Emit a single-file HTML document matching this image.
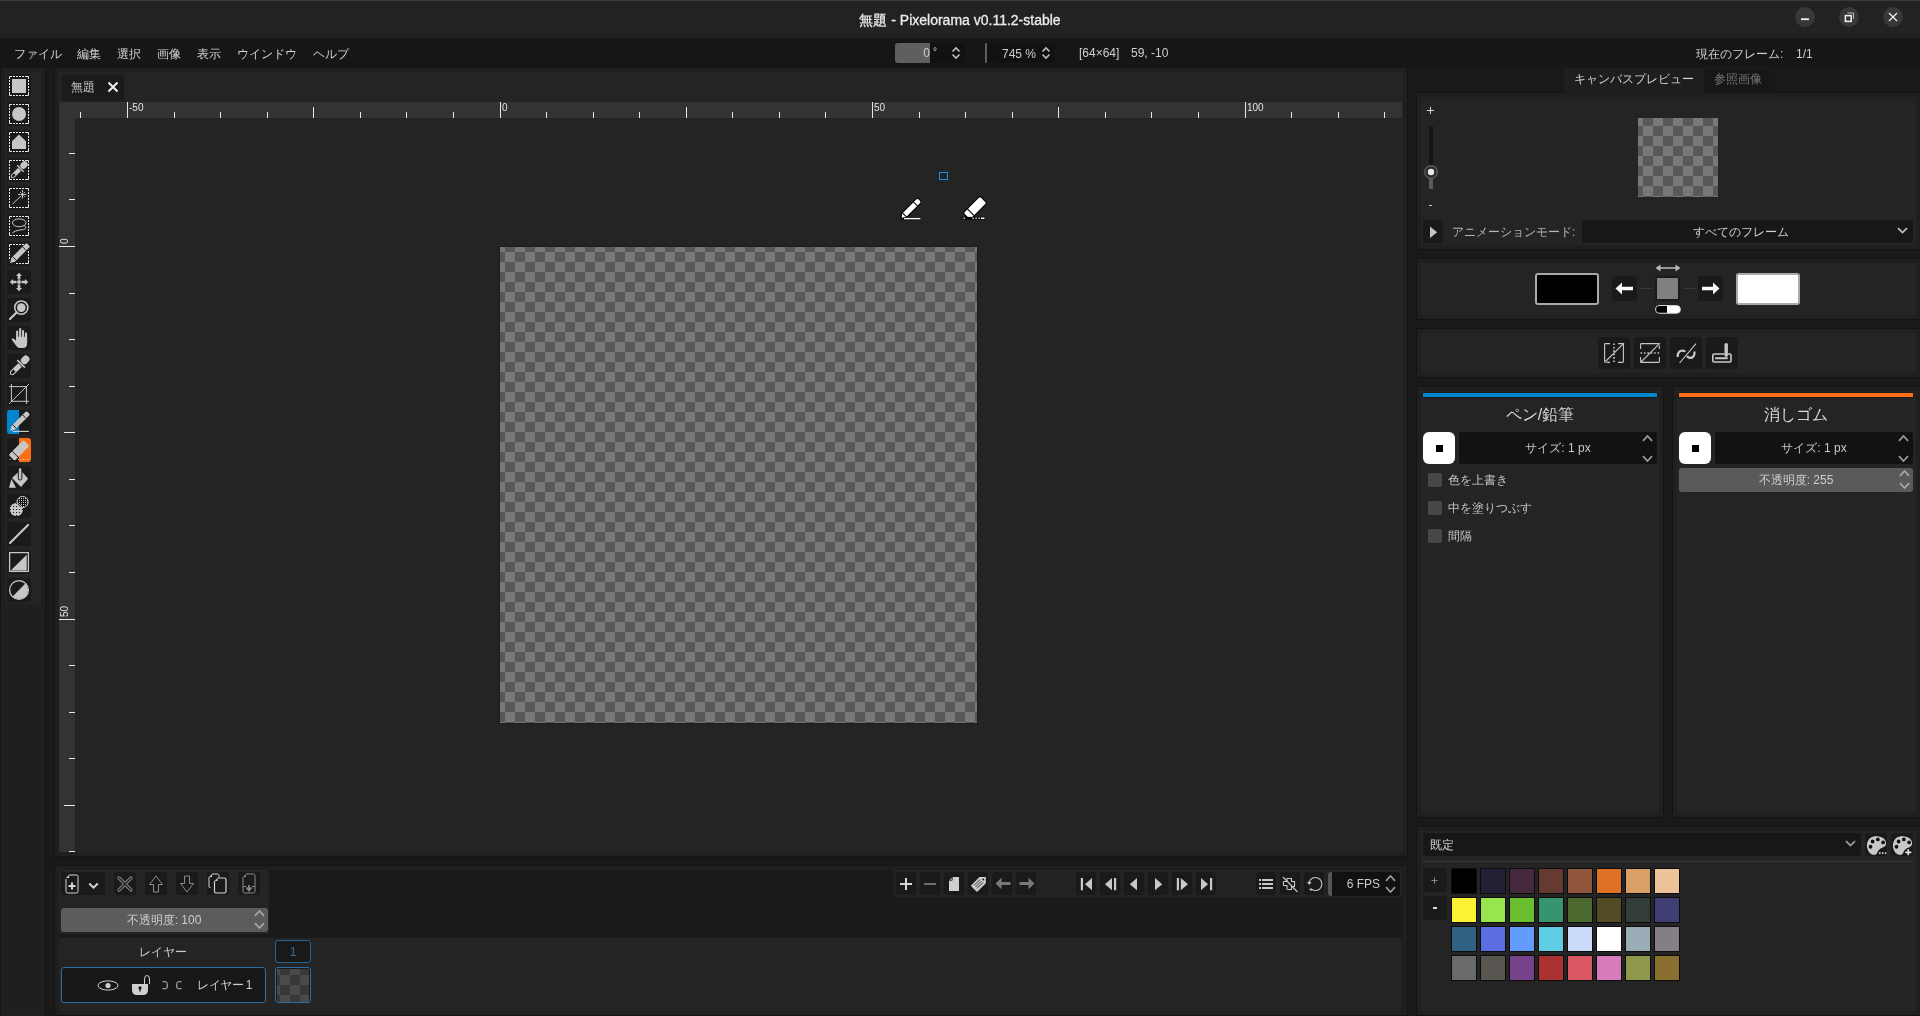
<!DOCTYPE html>
<html><head><meta charset="utf-8">
<style>
*{margin:0;padding:0;box-sizing:border-box}
html,body{width:1920px;height:1016px;overflow:hidden}
body{background:#191919;position:relative;font-family:"Liberation Sans",sans-serif;color:#d2d2d2;font-size:12px}
.a{position:absolute}
.p{position:absolute;background:#1f1f1f;border:1px solid #141414}
.i{position:absolute;background:#242424}
.t{position:absolute;white-space:nowrap;line-height:1;will-change:transform}
svg{position:absolute;overflow:visible}
</style></head><body>
<div class="a" style="left:0px;top:0px;width:1920px;height:38px;background:#222222;border-top:1px solid #3a3a3a"></div>
<div class="t" style="left:660px;width:600px;text-align:center;top:13px;font-size:14px;color:#ececec;-webkit-text-stroke:0.3px #ececec">無題 - Pixelorama v0.11.2-stable</div>
<div class="a" style="left:1795px;top:7px;width:20px;height:20px;background:#383838;border-radius:50%"></div>
<div class="a" style="left:1839px;top:7px;width:20px;height:20px;background:#383838;border-radius:50%"></div>
<div class="a" style="left:1883px;top:7px;width:20px;height:20px;background:#383838;border-radius:50%"></div>
<svg style="left:1801px;top:18px" width="8" height="3"><path d="M0 1.2 H8" stroke="#f2f2f2" stroke-width="1.8"/></svg>
<svg style="left:1844px;top:12px" width="11" height="11"><path d="M3.5 1 H9.5 V7" fill="none" stroke="#bdbdbd" stroke-width="1"/><rect x="1.4" y="3.6" width="5.8" height="5.8" fill="none" stroke="#f2f2f2" stroke-width="1.5"/></svg>
<svg style="left:1888px;top:12px" width="10" height="10"><path d="M1 1 L9 9 M9 1 L1 9" stroke="#f2f2f2" stroke-width="1.2"/></svg>
<div class="a" style="left:0px;top:38px;width:1920px;height:29px;background:#161616"></div>
<div class="t" style="left:14px;top:48px;font-size:12px;color:#d0d0d0;">ファイル</div>
<div class="t" style="left:77px;top:48px;font-size:12px;color:#d0d0d0;">編集</div>
<div class="t" style="left:117px;top:48px;font-size:12px;color:#d0d0d0;">選択</div>
<div class="t" style="left:157px;top:48px;font-size:12px;color:#d0d0d0;">画像</div>
<div class="t" style="left:197px;top:48px;font-size:12px;color:#d0d0d0;">表示</div>
<div class="t" style="left:237px;top:48px;font-size:12px;color:#d0d0d0;">ウインドウ</div>
<div class="t" style="left:313px;top:48px;font-size:12px;color:#d0d0d0;">ヘルプ</div>
<div class="p" style="left:0px;top:67px;width:46px;height:950px"></div>
<div class="i" style="left:5px;top:72px;width:36px;height:940px"></div>
<div class="a" style="left:5px;top:604px;width:36px;height:407px;background:#1f1f1f"></div>
<div class="p" style="left:54px;top:67px;width:1354px;height:790px"></div>
<div class="i" style="left:59px;top:72px;width:1344px;height:780px"></div>
<div class="p" style="left:54px;top:865px;width:1354px;height:151px"></div>
<div class="i" style="left:59px;top:870px;width:1344px;height:141px"></div>
<div class="p" style="left:1416px;top:92px;width:505px;height:158px"></div>
<div class="i" style="left:1421px;top:97px;width:495px;height:148px"></div>
<div class="p" style="left:1416px;top:258px;width:505px;height:62px"></div>
<div class="i" style="left:1421px;top:263px;width:495px;height:52px"></div>
<div class="p" style="left:1416px;top:328px;width:505px;height:50px"></div>
<div class="i" style="left:1421px;top:333px;width:495px;height:40px"></div>
<div class="p" style="left:1416px;top:386px;width:248px;height:432px"></div>
<div class="i" style="left:1421px;top:391px;width:238px;height:422px"></div>
<div class="p" style="left:1672px;top:386px;width:249px;height:432px"></div>
<div class="i" style="left:1677px;top:391px;width:239px;height:422px"></div>
<div class="p" style="left:1416px;top:826px;width:505px;height:190px"></div>
<div class="i" style="left:1421px;top:831px;width:495px;height:180px"></div>
<div class="a" style="left:895px;top:43px;width:70px;height:20px;background:#111111;border-radius:3px"></div>
<div class="a" style="left:895px;top:43px;width:35px;height:20px;background:#5f5f5f;border-radius:3px 0 0 3px"></div>
<div class="t" style="left:330px;width:600px;text-align:right;top:47px;font-size:12px;color:#cfcfcf;">0</div>
<div class="t" style="left:933px;top:47px;font-size:10px;color:#cfcfcf;">°</div>
<svg style="left:950px;top:45px" width="12" height="16"><path d="M2.5 6.5 L6 3 L9.5 6.5 M2.5 9.5 L6 13 L9.5 9.5" fill="none" stroke="#bdbdbd" stroke-width="1.6"/></svg>
<div class="a" style="left:985px;top:43px;width:2px;height:20px;background:#5f5f5f;border-radius:1px"></div>
<div class="a" style="left:987px;top:43px;width:68px;height:20px;background:#111111;border-radius:0 3px 3px 0"></div>
<div class="t" style="left:1002px;top:48px;font-size:12px;color:#cfcfcf;">745 %</div>
<svg style="left:1040px;top:45px" width="12" height="16"><path d="M2.5 6.5 L6 3 L9.5 6.5 M2.5 9.5 L6 13 L9.5 9.5" fill="none" stroke="#bdbdbd" stroke-width="1.6"/></svg>
<div class="t" style="left:1079px;top:47px;font-size:12px;color:#cfcfcf;">[64×64]</div>
<div class="t" style="left:1131px;top:47px;font-size:12px;color:#cfcfcf;">59, -10</div>
<div class="t" style="left:1696px;top:48px;font-size:12px;color:#cfcfcf;">現在のフレーム:</div>
<div class="t" style="left:1796px;top:48px;font-size:12px;color:#cfcfcf;">1/1</div>
<div class="a" style="left:61px;top:74px;width:64px;height:27px;background:#1b1b1b;border:1px solid #222;border-bottom:none"></div>
<div class="t" style="left:71px;top:81px;font-size:12px;color:#c8c8c8;">無題</div>
<svg style="left:107px;top:81px" width="12" height="12"><path d="M1.5 1.5 L10.5 10.5 M10.5 1.5 L1.5 10.5" stroke="#eeeeee" stroke-width="2"/></svg>
<div class="a" style="left:59px;top:102px;width:1343px;height:16px;background:#333333"></div>
<div class="a" style="left:59px;top:118px;width:16px;height:734px;background:#333333"></div>
<div class="a" style="left:80px;top:112px;width:1px;height:6px;background:#e8e8e8"></div>
<div class="a" style="left:127px;top:102px;width:1px;height:16px;background:#e8e8e8"></div>
<div class="t" style="left:129px;top:103px;font-size:10px;color:#e2e2e2">-50</div>
<div class="a" style="left:174px;top:112px;width:1px;height:6px;background:#e8e8e8"></div>
<div class="a" style="left:220px;top:112px;width:1px;height:6px;background:#e8e8e8"></div>
<div class="a" style="left:267px;top:112px;width:1px;height:6px;background:#e8e8e8"></div>
<div class="a" style="left:313px;top:107px;width:1px;height:11px;background:#e8e8e8"></div>
<div class="a" style="left:360px;top:112px;width:1px;height:6px;background:#e8e8e8"></div>
<div class="a" style="left:406px;top:112px;width:1px;height:6px;background:#e8e8e8"></div>
<div class="a" style="left:453px;top:112px;width:1px;height:6px;background:#e8e8e8"></div>
<div class="a" style="left:500px;top:102px;width:1px;height:16px;background:#e8e8e8"></div>
<div class="t" style="left:502px;top:103px;font-size:10px;color:#e2e2e2">0</div>
<div class="a" style="left:546px;top:112px;width:1px;height:6px;background:#e8e8e8"></div>
<div class="a" style="left:593px;top:112px;width:1px;height:6px;background:#e8e8e8"></div>
<div class="a" style="left:639px;top:112px;width:1px;height:6px;background:#e8e8e8"></div>
<div class="a" style="left:686px;top:107px;width:1px;height:11px;background:#e8e8e8"></div>
<div class="a" style="left:732px;top:112px;width:1px;height:6px;background:#e8e8e8"></div>
<div class="a" style="left:779px;top:112px;width:1px;height:6px;background:#e8e8e8"></div>
<div class="a" style="left:825px;top:112px;width:1px;height:6px;background:#e8e8e8"></div>
<div class="a" style="left:872px;top:102px;width:1px;height:16px;background:#e8e8e8"></div>
<div class="t" style="left:874px;top:103px;font-size:10px;color:#e2e2e2">50</div>
<div class="a" style="left:919px;top:112px;width:1px;height:6px;background:#e8e8e8"></div>
<div class="a" style="left:965px;top:112px;width:1px;height:6px;background:#e8e8e8"></div>
<div class="a" style="left:1012px;top:112px;width:1px;height:6px;background:#e8e8e8"></div>
<div class="a" style="left:1058px;top:107px;width:1px;height:11px;background:#e8e8e8"></div>
<div class="a" style="left:1105px;top:112px;width:1px;height:6px;background:#e8e8e8"></div>
<div class="a" style="left:1151px;top:112px;width:1px;height:6px;background:#e8e8e8"></div>
<div class="a" style="left:1198px;top:112px;width:1px;height:6px;background:#e8e8e8"></div>
<div class="a" style="left:1245px;top:102px;width:1px;height:16px;background:#e8e8e8"></div>
<div class="t" style="left:1247px;top:103px;font-size:10px;color:#e2e2e2">100</div>
<div class="a" style="left:1291px;top:112px;width:1px;height:6px;background:#e8e8e8"></div>
<div class="a" style="left:1338px;top:112px;width:1px;height:6px;background:#e8e8e8"></div>
<div class="a" style="left:1384px;top:112px;width:1px;height:6px;background:#e8e8e8"></div>
<div class="a" style="left:69px;top:153px;width:6px;height:1px;background:#e8e8e8"></div>
<div class="a" style="left:69px;top:199px;width:6px;height:1px;background:#e8e8e8"></div>
<div class="a" style="left:59px;top:246px;width:16px;height:1px;background:#e8e8e8"></div>
<div class="t" style="left:60px;top:244px;font-size:10px;color:#e2e2e2;transform:rotate(-90deg);transform-origin:0 0">0</div>
<div class="a" style="left:69px;top:293px;width:6px;height:1px;background:#e8e8e8"></div>
<div class="a" style="left:69px;top:339px;width:6px;height:1px;background:#e8e8e8"></div>
<div class="a" style="left:69px;top:386px;width:6px;height:1px;background:#e8e8e8"></div>
<div class="a" style="left:64px;top:432px;width:11px;height:1px;background:#e8e8e8"></div>
<div class="a" style="left:69px;top:479px;width:6px;height:1px;background:#e8e8e8"></div>
<div class="a" style="left:69px;top:525px;width:6px;height:1px;background:#e8e8e8"></div>
<div class="a" style="left:69px;top:572px;width:6px;height:1px;background:#e8e8e8"></div>
<div class="a" style="left:59px;top:619px;width:16px;height:1px;background:#e8e8e8"></div>
<div class="t" style="left:60px;top:617px;font-size:10px;color:#e2e2e2;transform:rotate(-90deg);transform-origin:0 0">50</div>
<div class="a" style="left:69px;top:665px;width:6px;height:1px;background:#e8e8e8"></div>
<div class="a" style="left:69px;top:712px;width:6px;height:1px;background:#e8e8e8"></div>
<div class="a" style="left:69px;top:758px;width:6px;height:1px;background:#e8e8e8"></div>
<div class="a" style="left:64px;top:805px;width:11px;height:1px;background:#e8e8e8"></div>
<div class="a" style="left:69px;top:851px;width:6px;height:1px;background:#e8e8e8"></div>
<div class="a" style="left:499px;top:246px;width:479px;height:478px;background:#1c1c1c"></div>
<div class="a" style="left:500px;top:247px;width:477px;height:476px;background-color:#575957;background-image:repeating-conic-gradient(#575957 0 25%,#787878 0 50%);background-size:20px 20px;background-position:-5px -5px"></div>
<svg style="left:939px;top:172px" width="10" height="10"><rect x="0.5" y="0.5" width="8" height="7" fill="none" stroke="#1a8fdc" stroke-width="1"/></svg>
<svg style="left:895px;top:193px" width="32" height="32" viewBox="0 0 32 32"><g transform="translate(6 25.5) rotate(-45)"><path d="M0 0 L4 -3.1 H24.5 Q26.4 -3.1 26.4 -1.2 V1.2 Q26.4 3.1 24.5 3.1 H4 Z" fill="#fff" stroke="#000" stroke-width="1.1"/><path d="M5 -3.1 V3.1 M20.5 -3.1 V3.1" stroke="#000" stroke-width="1"/></g><path d="M8.5 25.6 H26" stroke="#000" stroke-width="3"/><path d="M9 25.6 H25.5" stroke="#fff" stroke-width="1.5"/></svg>
<svg style="left:958px;top:192px" width="34" height="32" viewBox="0 0 34 32"><g transform="translate(17 16) rotate(-45)"><rect x="-12" y="-5" width="24" height="10" rx="2" fill="#fff" stroke="#000" stroke-width="1.1"/><path d="M-6 -5 V5" stroke="#000" stroke-width="1.1"/></g><path d="M5 26.2 H27" stroke="#000" stroke-width="2.6"/><path d="M5.6 26.2 H6.8 M14.5 26.2 H15.7 M17.5 26.2 H18.7 M20.5 26.2 H21.7 M23 26.2 H26.5" stroke="#fff" stroke-width="1.4"/></svg>
<div class="a" style="left:7px;top:74px;width:24px;height:24px;background:#1a1a1a;border-radius:3px"></div>
<svg style="left:9px;top:76px" width="20" height="20" viewBox="0 0 20 20"><path d="M0.5 3 V0.5 H3 M17 0.5 H19.5 V3 M19.5 17 V19.5 H17 M3 19.5 H0.5 V17 M4 0.5 H6 M4 19.5 H6 M0.5 4 V6 M19.5 4 V6 M7 0.5 H9 M7 19.5 H9 M0.5 7 V9 M19.5 7 V9 M10 0.5 H12 M10 19.5 H12 M0.5 10 V12 M19.5 10 V12 M13 0.5 H15 M13 19.5 H15 M0.5 13 V15 M19.5 13 V15 M16 0.5 H18 M16 19.5 H18 M0.5 16 V18 M19.5 16 V18 " fill="none" stroke="#e8e8e8" stroke-width="1"/><rect x="3" y="3" width="14" height="14" fill="#c6c6c6"/></svg>
<div class="a" style="left:7px;top:102px;width:24px;height:24px;background:#1a1a1a;border-radius:3px"></div>
<svg style="left:9px;top:104px" width="20" height="20" viewBox="0 0 20 20"><path d="M0.5 3 V0.5 H3 M17 0.5 H19.5 V3 M19.5 17 V19.5 H17 M3 19.5 H0.5 V17 M4 0.5 H6 M4 19.5 H6 M0.5 4 V6 M19.5 4 V6 M7 0.5 H9 M7 19.5 H9 M0.5 7 V9 M19.5 7 V9 M10 0.5 H12 M10 19.5 H12 M0.5 10 V12 M19.5 10 V12 M13 0.5 H15 M13 19.5 H15 M0.5 13 V15 M19.5 13 V15 M16 0.5 H18 M16 19.5 H18 M0.5 16 V18 M19.5 16 V18 " fill="none" stroke="#e8e8e8" stroke-width="1"/><circle cx="10" cy="10" r="7" fill="#c6c6c6"/></svg>
<div class="a" style="left:7px;top:130px;width:24px;height:24px;background:#1a1a1a;border-radius:3px"></div>
<svg style="left:9px;top:132px" width="20" height="20" viewBox="0 0 20 20"><path d="M0.5 3 V0.5 H3 M17 0.5 H19.5 V3 M19.5 17 V19.5 H17 M3 19.5 H0.5 V17 M4 0.5 H6 M4 19.5 H6 M0.5 4 V6 M19.5 4 V6 M7 0.5 H9 M7 19.5 H9 M0.5 7 V9 M19.5 7 V9 M10 0.5 H12 M10 19.5 H12 M0.5 10 V12 M19.5 10 V12 M13 0.5 H15 M13 19.5 H15 M0.5 13 V15 M19.5 13 V15 M16 0.5 H18 M16 19.5 H18 M0.5 16 V18 M19.5 16 V18 " fill="none" stroke="#e8e8e8" stroke-width="1"/><path d="M3 17 V9.3 L10 2.6 L17 9.3 V17 Z" fill="#c6c6c6"/></svg>
<div class="a" style="left:7px;top:158px;width:24px;height:24px;background:#1a1a1a;border-radius:3px"></div>
<svg style="left:9px;top:160px" width="20" height="20" viewBox="0 0 20 20"><path d="M0.5 3 V0.5 H3 M17 0.5 H19.5 V3 M19.5 17 V19.5 H17 M3 19.5 H0.5 V17 M4 0.5 H6 M4 19.5 H6 M0.5 4 V6 M19.5 4 V6 M7 0.5 H9 M7 19.5 H9 M0.5 7 V9 M19.5 7 V9 M10 0.5 H12 M10 19.5 H12 M0.5 10 V12 M19.5 10 V12 M13 0.5 H15 M13 19.5 H15 M0.5 13 V15 M19.5 13 V15 M16 0.5 H18 M16 19.5 H18 M0.5 16 V18 M19.5 16 V18 " fill="none" stroke="#e8e8e8" stroke-width="1"/><g transform="translate(10 10) scale(0.8) translate(-10 -10)"><g transform="translate(0.4 19.6) rotate(-45)"><path d="M6.2 -2.1 H2.2 L0.4 0 L2.2 2.1 H6.2" fill="none" stroke="#c6c6c6" stroke-width="1.2"/><rect x="6" y="-2.7" width="9" height="5.4" fill="#c6c6c6"/><rect x="15" y="-6.2" width="2.4" height="12.4" rx="1.1" fill="#c6c6c6" stroke="#161616" stroke-width="0.7"/><rect x="17.6" y="-3.9" width="9.6" height="7.8" rx="3.6" fill="#c6c6c6"/></g></g></svg>
<div class="a" style="left:7px;top:186px;width:24px;height:24px;background:#1a1a1a;border-radius:3px"></div>
<svg style="left:9px;top:188px" width="20" height="20" viewBox="0 0 20 20"><path d="M0.5 3 V0.5 H3 M17 0.5 H19.5 V3 M19.5 17 V19.5 H17 M3 19.5 H0.5 V17 M4 0.5 H6 M4 19.5 H6 M0.5 4 V6 M19.5 4 V6 M7 0.5 H9 M7 19.5 H9 M0.5 7 V9 M19.5 7 V9 M10 0.5 H12 M10 19.5 H12 M0.5 10 V12 M19.5 10 V12 M13 0.5 H15 M13 19.5 H15 M0.5 13 V15 M19.5 13 V15 M16 0.5 H18 M16 19.5 H18 M0.5 16 V18 M19.5 16 V18 " fill="none" stroke="#e8e8e8" stroke-width="1"/><path d="M3.5 16 L12.5 7.5" stroke="#c6c6c6" stroke-width="1"/><path d="M9 6.5 H18 M13.5 2 V11" stroke="#c6c6c6" stroke-width="1" stroke-dasharray="2.5 1.2 1 1.2 2.5"/><circle cx="13.5" cy="6.5" r="1.4" fill="#c6c6c6"/><path d="M11 4 l0.8 0.8 M16 4 l-0.8 0.8 M16 9 l-0.8 -0.8" stroke="#c6c6c6" stroke-width="1"/></svg>
<div class="a" style="left:7px;top:214px;width:24px;height:24px;background:#1a1a1a;border-radius:3px"></div>
<svg style="left:9px;top:216px" width="20" height="20" viewBox="0 0 20 20"><path d="M0.5 3 V0.5 H3 M17 0.5 H19.5 V3 M19.5 17 V19.5 H17 M3 19.5 H0.5 V17 M4 0.5 H6 M4 19.5 H6 M0.5 4 V6 M19.5 4 V6 M7 0.5 H9 M7 19.5 H9 M0.5 7 V9 M19.5 7 V9 M10 0.5 H12 M10 19.5 H12 M0.5 10 V12 M19.5 10 V12 M13 0.5 H15 M13 19.5 H15 M0.5 13 V15 M19.5 13 V15 M16 0.5 H18 M16 19.5 H18 M0.5 16 V18 M19.5 16 V18 " fill="none" stroke="#e8e8e8" stroke-width="1"/><ellipse cx="10.2" cy="6.8" rx="6.8" ry="3.9" fill="none" stroke="#c6c6c6" stroke-width="1"/><path d="M14.5 9.5 C17.5 10 17.5 13 14.5 13.6 C11 14 7 14.2 3.3 16.8" fill="none" stroke="#c6c6c6" stroke-width="1"/></svg>
<div class="a" style="left:7px;top:242px;width:24px;height:24px;background:#1a1a1a;border-radius:3px"></div>
<svg style="left:9px;top:244px" width="20" height="20" viewBox="0 0 20 20"><path d="M0.5 3 V0.5 H3 M19.5 17 V19.5 H17 M4 0.5 H6 M7 0.5 H9 M10 0.5 H12 M13 0.5 H15 M0.5 4 V6 M0.5 7 V9 M0.5 10 V12 M0.5 13 V15 M19.5 7 V9 M19.5 10 V12 M19.5 13 V15 M19.5 16 V17 M7 19.5 H9 M10 19.5 H12 M13 19.5 H15 M16 19.5 H17" fill="none" stroke="#e8e8e8" stroke-width="1"/><g transform="rotate(-45 10 10)"><path d="M-2.6 10 L1.8 7.4 H21.5 Q23.2 7.4 23.2 8.6 V11.4 Q23.2 12.6 21.5 12.6 H1.8 Z" fill="#c6c6c6"/><path d="M3.6 7.4 V12.6 M17.6 7.4 V12.6" stroke="#141414" stroke-width="0.9"/></g></svg>
<div class="a" style="left:7px;top:270px;width:24px;height:24px;background:#1a1a1a;border-radius:3px"></div>
<svg style="left:9px;top:272px" width="20" height="20" viewBox="0 0 20 20"><g fill="#c6c6c6"><circle cx="10" cy="10" r="2"/><path d="M10 0.8 L13 4 H11.3 V7.5 H8.7 V4 H7 Z"/><path d="M10 19.2 L13 16 H11.3 V12.5 H8.7 V16 H7 Z"/><path d="M0.8 10 L4 7 V8.7 H7.5 V11.3 H4 V13 Z"/><path d="M19.2 10 L16 7 V8.7 H12.5 V11.3 H16 V13 Z"/></g></svg>
<div class="a" style="left:7px;top:298px;width:24px;height:24px;background:#1a1a1a;border-radius:3px"></div>
<svg style="left:9px;top:300px" width="20" height="20" viewBox="0 0 20 20"><circle cx="12.3" cy="7.6" r="6.6" fill="none" stroke="#c6c6c6" stroke-width="1.6"/><circle cx="12.3" cy="7.6" r="4.3" fill="#c6c6c6"/><path d="M7.8 12.2 L1 19" stroke="#c6c6c6" stroke-width="2.2" stroke-linecap="round"/></svg>
<div class="a" style="left:7px;top:326px;width:24px;height:24px;background:#1a1a1a;border-radius:3px"></div>
<svg style="left:9px;top:328px" width="20" height="20" viewBox="0 0 20 20"><g fill="#c6c6c6"><rect x="7.1" y="2.6" width="2.1" height="10" rx="1"/><rect x="10.1" y="0" width="2.1" height="10" rx="1"/><rect x="13" y="2" width="2.1" height="10" rx="1"/><rect x="16" y="4.6" width="2.1" height="9" rx="1"/><path d="M7 8.8 H18.1 V15.5 Q18.1 20 13.5 20 H11 Q8.5 20 7 17.5 L2.7 11.5 Q2.7 10.3 4 10.3 L7 12.5 Z"/></g></svg>
<div class="a" style="left:7px;top:354px;width:24px;height:24px;background:#1a1a1a;border-radius:3px"></div>
<svg style="left:9px;top:356px" width="20" height="20" viewBox="0 0 20 20"><g transform="translate(10 10) scale(0.93) translate(-9.6 -10.4)"><g transform="translate(0.4 19.6) rotate(-45)"><path d="M6.2 -2.1 H2.2 L0.4 0 L2.2 2.1 H6.2" fill="none" stroke="#c6c6c6" stroke-width="1.2"/><rect x="6" y="-2.7" width="9" height="5.4" fill="#c6c6c6"/><rect x="15" y="-6.2" width="2.4" height="12.4" rx="1.1" fill="#c6c6c6" stroke="#161616" stroke-width="0.7"/><rect x="17.6" y="-3.9" width="9.6" height="7.8" rx="3.6" fill="#c6c6c6"/></g></g></svg>
<div class="a" style="left:7px;top:382px;width:24px;height:24px;background:#1a1a1a;border-radius:3px"></div>
<svg style="left:9px;top:384px" width="20" height="20" viewBox="0 0 20 20"><path d="M2.4 0 V17.3 H20 M0 2.6 H17.4 V20 M0 20 L20 0" fill="none" stroke="#c6c6c6" stroke-width="1"/></svg>
<div class="a" style="left:7px;top:410px;width:24px;height:24px;background:#1a1a1a;border-radius:3px;overflow:hidden"><div class="a" style="left:0;top:0;width:12px;height:24px;background:#0086cf"></div></div>
<svg style="left:9px;top:412px" width="20" height="20" viewBox="0 0 20 20"><g transform="rotate(-45 10 10)"><path d="M-2.6 10 L1.8 7.5 H21.5 Q23.2 7.5 23.2 8.7 V11.3 Q23.2 12.5 21.5 12.5 H1.8 Z" fill="#c6c6c6"/><path d="M3.6 7.5 V12.5 M17.6 7.5 V12.5" stroke="#141414" stroke-width="0.9"/></g><path d="M3.8 19.4 H20" stroke="#c6c6c6" stroke-width="1.2"/></svg>
<div class="a" style="left:7px;top:438px;width:24px;height:24px;background:#1a1a1a;border-radius:3px;overflow:hidden"><div class="a" style="left:12px;top:0;width:12px;height:24px;background:#fd6d14"></div></div>
<svg style="left:9px;top:440px" width="20" height="20" viewBox="0 0 20 20"><g transform="rotate(-45 10 10.4)"><rect x="-0.5" y="6.2" width="21" height="8.4" rx="1.6" fill="#c6c6c6"/><path d="M4.6 6 V14.8" stroke="#141414" stroke-width="0.9"/></g><path d="M9 19.5 H20" stroke="#c6c6c6" stroke-width="1" stroke-dasharray="1 1.5"/><path d="M0.5 19.5 h1" stroke="#c6c6c6" stroke-width="1"/></svg>
<div class="a" style="left:7px;top:466px;width:24px;height:24px;background:#1a1a1a;border-radius:3px"></div>
<svg style="left:9px;top:468px" width="20" height="20" viewBox="0 0 20 20"><g fill="#c6c6c6"><path d="M3 9.9 L11.5 2 L19.1 10.8 L12 19 Z"/><path d="M2.4 11 L7 19.8 H0 Z"/></g><rect x="9.3" y="-0.3" width="3.6" height="12.4" rx="1.8" fill="#c6c6c6" stroke="#141414" stroke-width="1"/></svg>
<div class="a" style="left:7px;top:494px;width:24px;height:24px;background:#1a1a1a;border-radius:3px"></div>
<svg style="left:9px;top:496px" width="20" height="20" viewBox="0 0 20 20"><defs><pattern id="stipL" width="2" height="2" patternUnits="userSpaceOnUse"><rect x="0" y="0" width="1" height="1" fill="#c6c6c6"/></pattern><pattern id="stipD" width="3" height="3" patternUnits="userSpaceOnUse"><rect x="1" y="1" width="1" height="1" fill="#161616"/></pattern><pattern id="chk" width="2" height="2" patternUnits="userSpaceOnUse"><rect x="0" y="0" width="1" height="1" fill="#c6c6c6"/><rect x="1" y="1" width="1" height="1" fill="#c6c6c6"/></pattern><clipPath id="c1"><circle cx="13.6" cy="6" r="5.6"/></clipPath></defs><circle cx="7.4" cy="13.5" r="6.6" fill="#c6c6c6"/><circle cx="7.4" cy="13.5" r="6.6" fill="url(#stipD)"/><circle cx="13.6" cy="6" r="5.6" fill="#161616"/><circle cx="13.6" cy="6" r="5.6" fill="url(#stipL)"/><g clip-path="url(#c1)"><circle cx="7.4" cy="13.5" r="6.6" fill="#161616"/><circle cx="7.4" cy="13.5" r="6.6" fill="url(#chk)"/></g><circle cx="13.6" cy="6" r="5.6" fill="none" stroke="#c6c6c6" stroke-width="1"/></svg>
<div class="a" style="left:7px;top:522px;width:24px;height:24px;background:#1a1a1a;border-radius:3px"></div>
<svg style="left:9px;top:524px" width="20" height="20" viewBox="0 0 20 20"><path d="M1 19 L19 1" stroke="#c6c6c6" stroke-width="2.2" stroke-linecap="round"/></svg>
<div class="a" style="left:7px;top:550px;width:24px;height:24px;background:#1a1a1a;border-radius:3px"></div>
<svg style="left:9px;top:552px" width="20" height="20" viewBox="0 0 20 20"><rect x="0.6" y="0.6" width="18.8" height="18.8" fill="none" stroke="#c6c6c6" stroke-width="1.3"/><path d="M1.8 18.6 L17.7 2.8 V18.6 Z" fill="#c6c6c6"/></svg>
<div class="a" style="left:7px;top:578px;width:24px;height:24px;background:#1a1a1a;border-radius:3px"></div>
<svg style="left:9px;top:580px" width="20" height="20" viewBox="0 0 20 20"><circle cx="10" cy="10" r="9.4" fill="none" stroke="#c6c6c6" stroke-width="1.3"/><path d="M3.6 16.4 L16.4 3.6 A8.1 8.1 0 0 1 3.6 16.4 Z" fill="#c6c6c6"/></svg>
<div class="a" style="left:1564px;top:68px;width:139px;height:25px;background:#1e1e1e"></div>
<div class="t" style="left:1574px;top:73px;font-size:12px;color:#d0d0d0;">キャンバスプレビュー</div>
<div class="a" style="left:1703px;top:68px;width:68px;height:25px;background:#171717;border:1px solid #1c1c1c;border-bottom:none"></div>
<div class="t" style="left:1714px;top:73px;font-size:12px;color:#737373;">参照画像</div>
<svg style="left:1426px;top:106px" width="10" height="10"><path d="M1 4.5 H8 M4.5 1 V8" stroke="#d8d8d8" stroke-width="1"/></svg>
<div class="a" style="left:1429px;top:126px;width:4px;height:46px;background:#141414"></div>
<div class="a" style="left:1429px;top:172px;width:4px;height:17px;background:#5a5a5a"></div>
<svg style="left:1423px;top:164px" width="16" height="16"><circle cx="8" cy="8" r="6.3" fill="#2a2a2a" stroke="#5a5a5a" stroke-width="1.4"/><circle cx="8" cy="8" r="3.2" fill="#e8e8e8"/></svg>
<div class="a" style="left:1429px;top:205px;width:3px;height:1px;background:#c8c8c8"></div>
<div class="a" style="left:1638px;top:118px;width:80px;height:79px;background-color:#575957;background-image:repeating-conic-gradient(#575957 0 25%,#787878 0 50%);background-size:20px 20px;background-position:-5px -2px"></div>
<div class="a" style="left:1423px;top:220px;width:20px;height:23px;background:#191919;border-radius:3px"></div>
<svg style="left:1429px;top:226px" width="10" height="13"><path d="M1 0.5 L8.2 6.2 L1 12 Z" fill="#c4c4c4"/></svg>
<div class="t" style="left:1452px;top:226px;font-size:12px;color:#b4b4b4;">アニメーションモード:</div>
<div class="a" style="left:1582px;top:220px;width:331px;height:23px;background:#171717;border-radius:3px"></div>
<div class="t" style="left:1441px;width:600px;text-align:center;top:226px;font-size:12px;color:#cfcfcf;">すべてのフレーム</div>
<svg style="left:1897px;top:227px" width="12" height="8"><path d="M1 1.2 L5.5 5.6 L10 1.2" fill="none" stroke="#bcbcbc" stroke-width="1.8"/></svg>
<div class="a" style="left:1535px;top:273px;width:64px;height:32px;background:#000;border:2px solid #a9a9a9;border-radius:3px"></div>
<div class="a" style="left:1736px;top:273px;width:64px;height:32px;background:#fff;border:2px solid #a9a9a9;border-radius:3px"></div>
<div class="a" style="left:1612px;top:276px;width:25px;height:25px;background:#1a1a1a;border-radius:3px"></div>
<div class="a" style="left:1698px;top:276px;width:25px;height:25px;background:#1a1a1a;border-radius:3px"></div>
<svg style="left:1612px;top:276px" width="25" height="25"><path d="M3.5 12.5 L10 6.5 V10.8 H21 V14.2 H10 V18.5 Z" fill="#fafafa"/></svg>
<svg style="left:1698px;top:276px" width="25" height="25"><path d="M21.5 12.5 L15 6.5 V10.8 H4 V14.2 H15 V18.5 Z" fill="#fafafa"/></svg>
<div class="a" style="left:1640px;top:288px;width:12px;height:1px;background:#383838"></div>
<div class="a" style="left:1683px;top:288px;width:12px;height:1px;background:#383838"></div>
<div class="a" style="left:1655px;top:276px;width:25px;height:25px;background:#1a1a1a;border-radius:3px"></div>
<div class="a" style="left:1657px;top:278px;width:21px;height:21px;background:#808080"></div>
<svg style="left:1655px;top:264px" width="26" height="9"><path d="M0.5 4 L5.5 0.5 V7.5 Z M25.5 4 L20.5 0.5 V7.5 Z" fill="#b8b8b8"/><path d="M5 4 H21" stroke="#e0e0e0" stroke-width="1.2"/></svg>
<svg style="left:1655px;top:305px" width="26" height="9"><rect x="0.6" y="0.6" width="24.8" height="7.6" rx="3.8" fill="#fff" stroke="#d8d8d8" stroke-width="1"/><path d="M4.4 1.1 H12 V7.7 H4.4 A3.3 3.3 0 0 1 4.4 1.1 Z" fill="#000"/></svg>
<div class="a" style="left:1598px;top:337px;width:32px;height:32px;background:#1a1a1a;border-radius:3px"></div>
<svg style="left:1604px;top:343px" width="20" height="20" viewBox="0 0 20 20"><path d="M6 0.6 H1.4 Q0.6 0.6 0.6 1.4 V18.6 M2.5 19.4 H6 M14 0.6 H18.6 Q19.4 0.6 19.4 1.4 V18.6 Q19.4 19.4 18.6 19.4 H14" fill="none" stroke="#c8c8c8" stroke-width="1.1"/><path d="M10 0.5 V19.5" stroke="#c8c8c8" stroke-width="1.6" stroke-dasharray="1.6 1.8"/><path d="M0.5 19.5 L20 0.2" stroke="#c8c8c8" stroke-width="1.1"/></svg>
<div class="a" style="left:1634px;top:337px;width:32px;height:32px;background:#1a1a1a;border-radius:3px"></div>
<svg style="left:1640px;top:343px" width="20" height="20" viewBox="0 0 20 20"><path d="M0.6 6 V1.4 Q0.6 0.6 1.4 0.6 H18.6 M19.4 2.5 V6 M0.6 14 V18.6 Q0.6 19.4 1.4 19.4 H18.6 Q19.4 19.4 19.4 18.6 V14" fill="none" stroke="#c8c8c8" stroke-width="1.1"/><path d="M0.5 10 H19.5" stroke="#c8c8c8" stroke-width="1.6" stroke-dasharray="1.6 1.8"/><path d="M0.5 19.5 L20 0.2" stroke="#c8c8c8" stroke-width="1.1"/></svg>
<div class="a" style="left:1670px;top:337px;width:32px;height:32px;background:#1a1a1a;border-radius:3px"></div>
<svg style="left:1676px;top:343px" width="20" height="20" viewBox="0 0 20 20"><path d="M1.6 14 Q1.6 7.6 6.5 7.6 Q8.6 7.6 9.2 8.8" fill="none" stroke="#c8c8c8" stroke-width="2.2"/><path d="M11.3 12.8 Q11.8 14.9 14 14.9 Q18.6 14.9 18.6 8.4" fill="none" stroke="#c8c8c8" stroke-width="2.2"/><path d="M3.6 20 L20 0.6" stroke="#c8c8c8" stroke-width="1.1"/></svg>
<div class="a" style="left:1706px;top:337px;width:32px;height:32px;background:#1a1a1a;border-radius:3px"></div>
<svg style="left:1712px;top:343px" width="20" height="20" viewBox="0 0 20 20"><rect x="12.5" y="0" width="3.4" height="14" rx="1.7" fill="#c8c8c8"/><path d="M12.6 11 H2.2 Q0.8 11 0.8 12.5 V17.8 Q0.8 19 2.2 19 H17.6 Q19 19 19 17.8 V12.5 Q19 11 17.6 11 H16" fill="none" stroke="#c8c8c8" stroke-width="1.6"/><path d="M3.8 15.2 H15" stroke="#c8c8c8" stroke-width="1.9" stroke-linecap="round"/></svg>
<div class="a" style="left:1423px;top:393px;width:234px;height:4px;background:#0086cf;box-shadow:0 0 0 1px #1b1b1b"></div>
<div class="t" style="left:1240px;width:600px;text-align:center;top:407px;font-size:16px;color:#d8d8d8;">ペン/鉛筆</div>
<div class="a" style="left:1423px;top:432px;width:32px;height:32px;background:#fff;border-radius:6px"></div>
<div class="a" style="left:1436px;top:445px;width:7px;height:7px;background:#000"></div>
<div class="a" style="left:1459px;top:432px;width:198px;height:32px;background:#121212;border-radius:3px"></div>
<div class="t" style="left:1258px;width:600px;text-align:center;top:442px;font-size:12px;color:#c8c8c8;">サイズ: 1 px</div>
<svg style="left:1642px;top:435px" width="11" height="7"><path d="M1 5.8 L5.5 1 L10 5.8" fill="none" stroke="#9c9c9c" stroke-width="1.7"/></svg>
<svg style="left:1642px;top:455px" width="11" height="7"><path d="M1 1.2 L5.5 6 L10 1.2" fill="none" stroke="#9c9c9c" stroke-width="1.7"/></svg>
<div class="a" style="left:1679px;top:393px;width:234px;height:4px;background:#fd6d14;box-shadow:0 0 0 1px #1b1b1b"></div>
<div class="t" style="left:1496px;width:600px;text-align:center;top:407px;font-size:16px;color:#d8d8d8;">消しゴム</div>
<div class="a" style="left:1679px;top:432px;width:32px;height:32px;background:#fff;border-radius:6px"></div>
<div class="a" style="left:1692px;top:445px;width:7px;height:7px;background:#000"></div>
<div class="a" style="left:1715px;top:432px;width:198px;height:32px;background:#121212;border-radius:3px"></div>
<div class="t" style="left:1514px;width:600px;text-align:center;top:442px;font-size:12px;color:#c8c8c8;">サイズ: 1 px</div>
<svg style="left:1898px;top:435px" width="11" height="7"><path d="M1 5.8 L5.5 1 L10 5.8" fill="none" stroke="#9c9c9c" stroke-width="1.7"/></svg>
<svg style="left:1898px;top:455px" width="11" height="7"><path d="M1 1.2 L5.5 6 L10 1.2" fill="none" stroke="#9c9c9c" stroke-width="1.7"/></svg>
<div class="a" style="left:1428px;top:473px;width:14px;height:14px;background:#474747;border-radius:2px"></div>
<div class="t" style="left:1448px;top:474px;font-size:12px;color:#c4c4c4;">色を上書き</div>
<div class="a" style="left:1428px;top:501px;width:14px;height:14px;background:#474747;border-radius:2px"></div>
<div class="t" style="left:1448px;top:502px;font-size:12px;color:#c4c4c4;">中を塗りつぶす</div>
<div class="a" style="left:1428px;top:529px;width:14px;height:14px;background:#474747;border-radius:2px"></div>
<div class="t" style="left:1448px;top:530px;font-size:12px;color:#c4c4c4;">間隔</div>
<div class="a" style="left:1679px;top:468px;width:234px;height:24px;background:#5a5a5a;border-radius:3px"></div>
<div class="t" style="left:1496px;width:600px;text-align:center;top:474px;font-size:12px;color:#cdcdcd;">不透明度: 255</div>
<svg style="left:1899px;top:470px" width="11" height="7"><path d="M1 5.8 L5.5 1 L10 5.8" fill="none" stroke="#a8a8a8" stroke-width="1.7"/></svg>
<svg style="left:1899px;top:482px" width="11" height="7"><path d="M1 1.2 L5.5 6 L10 1.2" fill="none" stroke="#a8a8a8" stroke-width="1.7"/></svg>
<div class="a" style="left:1423px;top:833px;width:438px;height:23px;background:#171717;border-radius:3px"></div>
<div class="t" style="left:1430px;top:839px;font-size:12px;color:#cfcfcf;">既定</div>
<svg style="left:1845px;top:840px" width="12" height="8"><path d="M1 1.2 L5.5 5.6 L10 1.2" fill="none" stroke="#9c9c9c" stroke-width="1.8"/></svg>
<div class="a" style="left:1865px;top:833px;width:22px;height:23px;background:#1a1a1a;border-radius:3px"></div>
<div class="a" style="left:1891px;top:833px;width:22px;height:23px;background:#1a1a1a;border-radius:3px"></div>
<svg style="left:1866px;top:835px" width="21" height="21" viewBox="0 0 20 20"><path d="M9.5 0.6 C15 0.6 19.6 3.5 19.6 8 C19.6 10.8 17 12 14.5 13 C12 14 11.8 16 10.5 18 C9.5 19.6 6.5 20 4 18 C1.5 16 0.4 13 0.4 10 C0.4 4.5 4.5 0.6 9.5 0.6 Z" fill="#c8c8c8" stroke="#0e0e0e" stroke-width="0.9"/><g fill="#111"><circle cx="6.3" cy="6.2" r="1.8"/><circle cx="11.3" cy="4.2" r="1.8"/><circle cx="16.3" cy="7.1" r="1.8"/><circle cx="4.3" cy="11.2" r="1.8"/></g><g fill="#e8e8e8" stroke="#111" stroke-width="0.5"><rect x="12.2" y="16.2" width="2" height="2"/><rect x="15" y="16.2" width="2" height="2"/><rect x="17.8" y="16.2" width="2" height="2"/></g></svg>
<svg style="left:1892px;top:835px" width="21" height="21" viewBox="0 0 20 20"><path d="M9.5 0.6 C15 0.6 19.6 3.5 19.6 8 C19.6 10.8 17 12 14.5 13 C12 14 11.8 16 10.5 18 C9.5 19.6 6.5 20 4 18 C1.5 16 0.4 13 0.4 10 C0.4 4.5 4.5 0.6 9.5 0.6 Z" fill="#c8c8c8" stroke="#0e0e0e" stroke-width="0.9"/><g fill="#111"><circle cx="6.3" cy="6.2" r="1.8"/><circle cx="11.3" cy="4.2" r="1.8"/><circle cx="16.3" cy="7.1" r="1.8"/><circle cx="4.3" cy="11.2" r="1.8"/></g><path d="M15.5 13 V20 M12 16.5 H19" stroke="#111" stroke-width="3"/><path d="M15.5 13.6 V19.4 M12.6 16.5 H18.4" stroke="#e8e8e8" stroke-width="1.6"/></svg>
<div class="a" style="left:1422px;top:861px;width:492px;height:1px;background:#363636"></div>
<div class="a" style="left:1423px;top:868px;width:24px;height:24px;background:#1a1a1a;border-radius:3px"></div>
<div class="a" style="left:1423px;top:896px;width:24px;height:24px;background:#1a1a1a;border-radius:3px"></div>
<svg style="left:1431px;top:877px" width="8" height="8"><path d="M0.5 3.5 H6.5 M3.5 0.5 V6.5" stroke="#8a8a8a" stroke-width="1"/></svg>
<div class="a" style="left:1433px;top:907px;width:4px;height:2px;background:#d8d8d8"></div>
<div class="a" style="left:1451px;top:868px;width:26px;height:26px;background:#000000;border:1px solid #0c0c0c"></div>
<div class="a" style="left:1480px;top:868px;width:26px;height:26px;background:#222034;border:1px solid #0c0c0c"></div>
<div class="a" style="left:1509px;top:868px;width:26px;height:26px;background:#45283c;border:1px solid #0c0c0c"></div>
<div class="a" style="left:1538px;top:868px;width:26px;height:26px;background:#663931;border:1px solid #0c0c0c"></div>
<div class="a" style="left:1567px;top:868px;width:26px;height:26px;background:#8f563b;border:1px solid #0c0c0c"></div>
<div class="a" style="left:1596px;top:868px;width:26px;height:26px;background:#df7126;border:1px solid #0c0c0c"></div>
<div class="a" style="left:1625px;top:868px;width:26px;height:26px;background:#d9a066;border:1px solid #0c0c0c"></div>
<div class="a" style="left:1654px;top:868px;width:26px;height:26px;background:#eec39a;border:1px solid #0c0c0c"></div>
<div class="a" style="left:1451px;top:897px;width:26px;height:26px;background:#fbf236;border:1px solid #0c0c0c"></div>
<div class="a" style="left:1480px;top:897px;width:26px;height:26px;background:#99e550;border:1px solid #0c0c0c"></div>
<div class="a" style="left:1509px;top:897px;width:26px;height:26px;background:#6abe30;border:1px solid #0c0c0c"></div>
<div class="a" style="left:1538px;top:897px;width:26px;height:26px;background:#37946e;border:1px solid #0c0c0c"></div>
<div class="a" style="left:1567px;top:897px;width:26px;height:26px;background:#4b692f;border:1px solid #0c0c0c"></div>
<div class="a" style="left:1596px;top:897px;width:26px;height:26px;background:#524b24;border:1px solid #0c0c0c"></div>
<div class="a" style="left:1625px;top:897px;width:26px;height:26px;background:#323c39;border:1px solid #0c0c0c"></div>
<div class="a" style="left:1654px;top:897px;width:26px;height:26px;background:#3f3f74;border:1px solid #0c0c0c"></div>
<div class="a" style="left:1451px;top:926px;width:26px;height:26px;background:#306082;border:1px solid #0c0c0c"></div>
<div class="a" style="left:1480px;top:926px;width:26px;height:26px;background:#5b6ee1;border:1px solid #0c0c0c"></div>
<div class="a" style="left:1509px;top:926px;width:26px;height:26px;background:#639bff;border:1px solid #0c0c0c"></div>
<div class="a" style="left:1538px;top:926px;width:26px;height:26px;background:#5fcde4;border:1px solid #0c0c0c"></div>
<div class="a" style="left:1567px;top:926px;width:26px;height:26px;background:#cbdbfc;border:1px solid #0c0c0c"></div>
<div class="a" style="left:1596px;top:926px;width:26px;height:26px;background:#ffffff;border:1px solid #0c0c0c"></div>
<div class="a" style="left:1625px;top:926px;width:26px;height:26px;background:#9badb7;border:1px solid #0c0c0c"></div>
<div class="a" style="left:1654px;top:926px;width:26px;height:26px;background:#847e87;border:1px solid #0c0c0c"></div>
<div class="a" style="left:1451px;top:955px;width:26px;height:26px;background:#696a6a;border:1px solid #0c0c0c"></div>
<div class="a" style="left:1480px;top:955px;width:26px;height:26px;background:#595652;border:1px solid #0c0c0c"></div>
<div class="a" style="left:1509px;top:955px;width:26px;height:26px;background:#76428a;border:1px solid #0c0c0c"></div>
<div class="a" style="left:1538px;top:955px;width:26px;height:26px;background:#ac3232;border:1px solid #0c0c0c"></div>
<div class="a" style="left:1567px;top:955px;width:26px;height:26px;background:#d95763;border:1px solid #0c0c0c"></div>
<div class="a" style="left:1596px;top:955px;width:26px;height:26px;background:#d77bba;border:1px solid #0c0c0c"></div>
<div class="a" style="left:1625px;top:955px;width:26px;height:26px;background:#8f974a;border:1px solid #0c0c0c"></div>
<div class="a" style="left:1654px;top:955px;width:26px;height:26px;background:#8a6f30;border:1px solid #0c0c0c"></div>
<div class="a" style="left:59px;top:870px;width:1343px;height:68px;background:#1a1a1a"></div>
<div class="a" style="left:59px;top:870px;width:210px;height:64px;background:#242424"></div>
<div class="a" style="left:894px;top:870px;width:508px;height:27px;background:#232323"></div>
<div class="a" style="left:893px;top:870px;width:1px;height:27px;background:#1c1c1c"></div>
<div class="a" style="left:61px;top:872px;width:44px;height:23px;background:#1a1a1a;border-radius:3px"></div>
<svg style="left:65px;top:874px" width="14" height="20" viewBox="0 0 14 20"><path d="M4 1 H11.5 Q13 1 13 2.5 V17.5 Q13 19 11.5 19 H2.5 Q1 19 1 17.5 V5" fill="none" stroke="#d6d6d6" stroke-width="1"/><path d="M1 4 L4 1 V4 Z" fill="#d6d6d6"/><path d="M7 8.5 V15.5 M3.5 12 H10.5" stroke="#d6d6d6" stroke-width="2"/></svg>
<svg style="left:88px;top:882px" width="12" height="8"><path d="M1.2 1.5 L5.5 5.6 L9.8 1.5" fill="none" stroke="#d6d6d6" stroke-width="2"/></svg>
<div class="a" style="left:114px;top:872px;width:22px;height:23px;background:#1a1a1a;border-radius:3px"></div>
<svg style="left:117px;top:876px" width="16" height="16"><path d="M2 2 L14 14 M14 2 L2 14" stroke="#8a8a8a" stroke-width="3.2" stroke-linecap="round"/><path d="M2 2 L14 14 M14 2 L2 14" stroke="#1a1a1a" stroke-width="1.4" stroke-linecap="round"/></svg>
<div class="a" style="left:145px;top:872px;width:22px;height:23px;background:#1a1a1a;border-radius:3px"></div>
<svg style="left:148px;top:875px" width="16" height="18"><path d="M8 1 L14.5 9.5 H10.5 V17 H5.5 V9.5 H1.5 Z" fill="none" stroke="#8a8a8a" stroke-width="1"/></svg>
<div class="a" style="left:176px;top:872px;width:22px;height:23px;background:#1a1a1a;border-radius:3px"></div>
<svg style="left:179px;top:875px" width="16" height="18"><path d="M8 17 L14.5 8.5 H10.5 V1 H5.5 V8.5 H1.5 Z" fill="none" stroke="#8a8a8a" stroke-width="1"/></svg>
<div class="a" style="left:207px;top:872px;width:22px;height:23px;background:#1a1a1a;border-radius:3px"></div>
<svg style="left:208px;top:873px" width="20" height="21"><path d="M4 1 H9.5 Q11 1 11 2.5 V4 M2.5 14.5 H1.8 Q1 14.5 1 13.5 V4" fill="none" stroke="#d6d6d6" stroke-width="1"/><path d="M1 4 L4 1 V4 Z" fill="#d6d6d6"/><path d="M9.5 5 H16.5 Q18 5 18 6.5 V18.5 Q18 20 16.5 20 H8 Q6.5 20 6.5 18.5 V8" fill="none" stroke="#d6d6d6" stroke-width="1.2"/><path d="M6.5 8 L9.5 5 V8 Z" fill="#d6d6d6"/></svg>
<div class="a" style="left:238px;top:872px;width:22px;height:23px;background:#1a1a1a;border-radius:3px"></div>
<svg style="left:242px;top:873px" width="14" height="21"><path d="M4 1 H11.5 Q13 1 13 2.5 V18.5 Q13 20 11.5 20 H2.5 Q1 20 1 18.5 V4" fill="none" stroke="#8a8a8a" stroke-width="1"/><path d="M1 4 L4 1 V4 Z" fill="#8a8a8a"/><path d="M1 13.5 H4 M10 13.5 H13" stroke="#8a8a8a" stroke-width="1"/><path d="M7 12 V17 M4.5 14.5 L7 17.5 L9.5 14.5" fill="none" stroke="#8a8a8a" stroke-width="1.8"/></svg>
<div class="a" style="left:61px;top:908px;width:207px;height:24px;background:#5c5c5c;border-radius:3px"></div>
<div class="t" style="left:-136px;width:600px;text-align:center;top:914px;font-size:12px;color:#cdcdcd;">不透明度: 100</div>
<svg style="left:254px;top:910px" width="11" height="7"><path d="M1 5.8 L5.5 1 L10 5.8" fill="none" stroke="#a8a8a8" stroke-width="1.7"/></svg>
<svg style="left:254px;top:922px" width="11" height="7"><path d="M1 1.2 L5.5 6 L10 1.2" fill="none" stroke="#a8a8a8" stroke-width="1.7"/></svg>
<div class="t" style="left:-137px;width:600px;text-align:center;top:946px;font-size:12px;color:#cacaca;">レイヤー</div>
<div class="a" style="left:275px;top:940px;width:36px;height:23px;background:#191919;border:1px solid #28628f;border-radius:3px"></div>
<div class="t" style="left:-7px;width:600px;text-align:center;top:946px;font-size:12px;color:#33709f;">1</div>
<div class="a" style="left:61px;top:967px;width:205px;height:36px;background:#181818;border:1px solid #2c6fa7;border-radius:3px"></div>
<svg style="left:97px;top:980px" width="23" height="12"><ellipse cx="11" cy="5.5" rx="10" ry="4.6" fill="none" stroke="#cfcfcf" stroke-width="1"/><circle cx="11" cy="5.5" r="2.6" fill="#cfcfcf"/></svg>
<svg style="left:131px;top:974px" width="20" height="22"><path d="M13.5 10 V5 Q13.5 1.5 16 1.5 Q18.5 1.5 18.5 5 V10" fill="none" stroke="#cfcfcf" stroke-width="1"/><path d="M1 10 H17 V16 Q17 21 12 21 H6 Q1 21 1 16 Z" fill="#cfcfcf"/><circle cx="9" cy="13.8" r="1.6" fill="#111"/><path d="M9 14 V17.5" stroke="#111" stroke-width="1.3"/></svg>
<svg style="left:162px;top:981px" width="22" height="9"><path d="M0.5 0.8 H3.5 Q5.2 0.8 5.2 2.5 V6 Q5.2 7.7 3.5 7.7 H0.5" fill="none" stroke="#c8c8c8" stroke-width="1"/><path d="M19.5 0.8 H16.5 Q14.8 0.8 14.8 2.5 V6 Q14.8 7.7 16.5 7.7 H19.5" fill="none" stroke="#c8c8c8" stroke-width="1"/></svg>
<div class="t" style="left:197px;top:979px;font-size:12px;color:#cfcfcf;letter-spacing:-0.5px">レイヤー 1</div>
<div class="a" style="left:275px;top:967px;width:36px;height:36px;background:#181818;border:1px solid #2c6fa7;border-radius:3px"></div>
<div class="a" style="left:277px;top:969px;width:32px;height:33px;background-color:#383838;background-image:repeating-conic-gradient(#383838 0 25%,#4a4a4a 0 50%);background-size:20px 20px;background-position:-7px -4px"></div>
<div class="a" style="left:896px;top:872px;width:20px;height:23px;background:#1a1a1a;border-radius:3px"></div>
<div class="a" style="left:920px;top:872px;width:20px;height:23px;background:#1a1a1a;border-radius:3px"></div>
<div class="a" style="left:944px;top:872px;width:20px;height:23px;background:#1a1a1a;border-radius:3px"></div>
<div class="a" style="left:968px;top:872px;width:20px;height:23px;background:#1a1a1a;border-radius:3px"></div>
<div class="a" style="left:992px;top:872px;width:20px;height:23px;background:#1a1a1a;border-radius:3px"></div>
<div class="a" style="left:1016px;top:872px;width:20px;height:23px;background:#1a1a1a;border-radius:3px"></div>
<div class="a" style="left:1076px;top:872px;width:20px;height:23px;background:#1a1a1a;border-radius:3px"></div>
<div class="a" style="left:1100px;top:872px;width:20px;height:23px;background:#1a1a1a;border-radius:3px"></div>
<div class="a" style="left:1124px;top:872px;width:20px;height:23px;background:#1a1a1a;border-radius:3px"></div>
<div class="a" style="left:1148px;top:872px;width:20px;height:23px;background:#1a1a1a;border-radius:3px"></div>
<div class="a" style="left:1172px;top:872px;width:20px;height:23px;background:#1a1a1a;border-radius:3px"></div>
<div class="a" style="left:1196px;top:872px;width:20px;height:23px;background:#1a1a1a;border-radius:3px"></div>
<div class="a" style="left:1256px;top:872px;width:20px;height:23px;background:#1a1a1a;border-radius:3px"></div>
<div class="a" style="left:1280px;top:872px;width:20px;height:23px;background:#1a1a1a;border-radius:3px"></div>
<div class="a" style="left:1304px;top:872px;width:20px;height:23px;background:#1a1a1a;border-radius:3px"></div>
<svg style="left:900px;top:878px" width="12" height="12"><path d="M0 6 H12 M6 0 V12" stroke="#d6d6d6" stroke-width="2"/></svg>
<svg style="left:924px;top:883px" width="12" height="2"><path d="M0 1 H12" stroke="#6e6e6e" stroke-width="2"/></svg>
<svg style="left:949px;top:877px" width="10" height="14"><path d="M3.5 0 H10 V14 H0 V3.5 Z" fill="#cfcfcf"/><path d="M0 3.2 H3.2 V0" fill="none" stroke="#1a1a1a" stroke-width="0.9"/></svg>
<svg style="left:970px;top:876px" width="17" height="17"><path d="M9.5 1 H15.8 V7.3 L7 16 L0.8 9.8 Z" fill="#cfcfcf"/><circle cx="13.2" cy="3.6" r="1" fill="#1a1a1a"/><path d="M4 9.5 L10 3.5 M5.5 11 L11.5 5 M7 12.5 L13 6.5" stroke="#1a1a1a" stroke-width="0.9"/></svg>
<svg style="left:995px;top:877px" width="16" height="13"><path d="M0.5 6.5 L6.5 0.8 V5 H15.5 V8 H6.5 V12.2 Z" fill="#7a7a7a"/></svg>
<svg style="left:1019px;top:877px" width="16" height="13"><path d="M15.5 6.5 L9.5 0.8 V5 H0.5 V8 H9.5 V12.2 Z" fill="#7a7a7a"/></svg>
<svg style="left:1076px;top:872px" width="20" height="23"><rect x="4.8" y="6" width="2.2" height="12.3" fill="#c8c8c8"/><path d="M16 6 V18.3 L9 12.15 Z" fill="#c8c8c8"/></svg>
<svg style="left:1100px;top:872px" width="20" height="23"><rect x="14" y="6" width="2.2" height="12.3" fill="#c8c8c8"/><path d="M12 6 V18.3 L5 12.15 Z" fill="#c8c8c8"/></svg>
<svg style="left:1124px;top:872px" width="20" height="23"><path d="M13 6 V18.3 L5.8 12.15 Z" fill="#c8c8c8"/></svg>
<svg style="left:1148px;top:872px" width="20" height="23"><path d="M7 6 V18.3 L14.2 12.15 Z" fill="#c8c8c8"/></svg>
<svg style="left:1172px;top:872px" width="20" height="23"><rect x="4.8" y="6" width="2.2" height="12.3" fill="#c8c8c8"/><path d="M8.8 6 V18.3 L16 12.15 Z" fill="#c8c8c8"/></svg>
<svg style="left:1196px;top:872px" width="20" height="23"><rect x="14" y="6" width="2.2" height="12.3" fill="#c8c8c8"/><path d="M5 6 V18.3 L12 12.15 Z" fill="#c8c8c8"/></svg>
<svg style="left:1256px;top:872px" width="20" height="23"><path d="M3 8 H5 M3 12 H5 M3 16 H5" stroke="#c8c8c8" stroke-width="2"/><path d="M6 8 H17 M6 12 H17 M6 16 H17" stroke="#c8c8c8" stroke-width="2"/></svg>
<svg style="left:1280px;top:872px" width="20" height="23"><path d="M3.5 9.5 H7 V6.5 H11.5 V9.5 H14.5 V14.5 H11.5 V17.5 H7.5 M3.5 9.5 V13.5 H7 V17.5" fill="none" stroke="#c8c8c8" stroke-width="1.1"/><path d="M3 5 L17.5 20" stroke="#c8c8c8" stroke-width="1.1"/></svg>
<svg style="left:1304px;top:872px" width="20" height="23"><path d="M5.2 10 A6.5 6.5 0 1 1 8 17.5" fill="none" stroke="#c8c8c8" stroke-width="1.1"/><path d="M3 10 H7.5 L5.3 13 Z" fill="#c8c8c8"/><path d="M7 16 V19 M5.5 17.5 H8.5" stroke="#c8c8c8" stroke-width="1"/></svg>
<div class="a" style="left:1328px;top:872px;width:72px;height:24px;background:#111111;border-radius:3px"></div>
<div class="a" style="left:1328px;top:872px;width:4px;height:24px;background:#555555;border-radius:3px 0 0 3px"></div>
<div class="t" style="left:780px;width:600px;text-align:right;top:878px;font-size:12px;color:#cacaca;">6 FPS</div>
<svg style="left:1385px;top:875px" width="11" height="7"><path d="M1 5.8 L5.5 1 L10 5.8" fill="none" stroke="#9c9c9c" stroke-width="1.7"/></svg>
<svg style="left:1385px;top:886px" width="11" height="7"><path d="M1 1.2 L5.5 6 L10 1.2" fill="none" stroke="#9c9c9c" stroke-width="1.7"/></svg>
<div class="a" style="left:1402px;top:870px;width:1px;height:141px;background:#1a1a1a"></div>
</body></html>
